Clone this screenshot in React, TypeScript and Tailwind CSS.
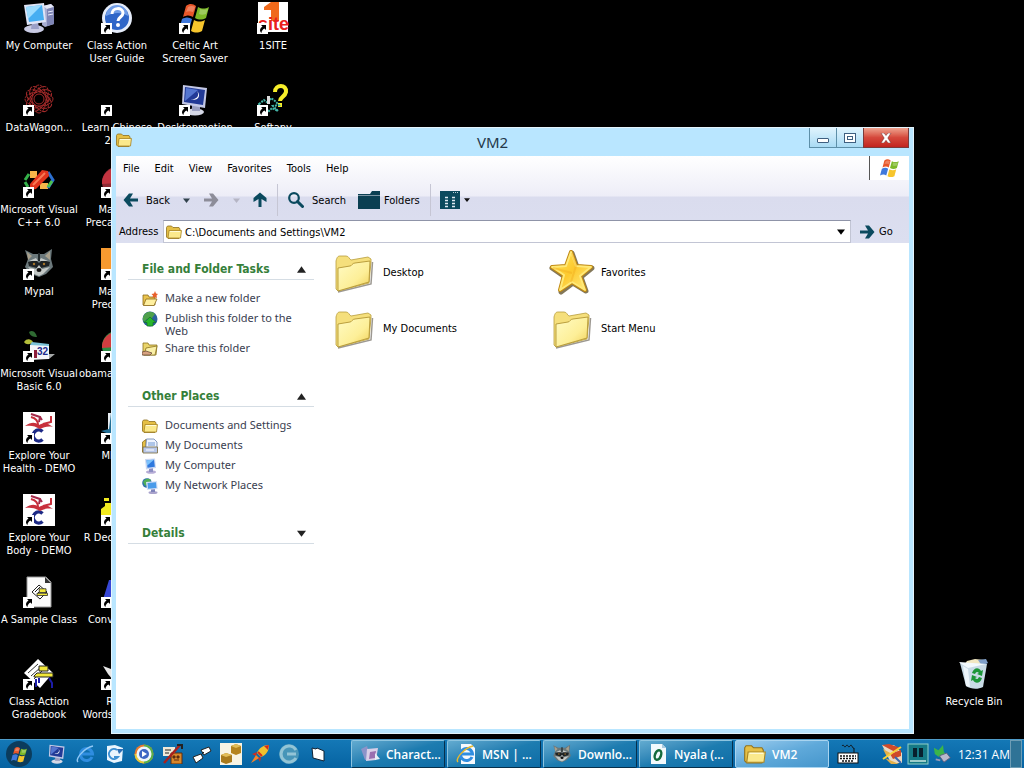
import type { ReactNode } from "react";

/* ---------- desktop icons (32 x 32) ---------- */

function Svg({ s = 32, v = 32, children }: { s?: number; v?: number; children: ReactNode }) {
  return (
    <svg width={s} height={s} viewBox={`0 0 ${v} ${v}`} aria-hidden="true" className="block shrink-0">
      {children}
    </svg>
  );
}

function WinFlag({ s = 32 }: { s?: number }) {
  return (
    <Svg s={s}>
      <path d="M7 4c4-3 7-2 10 0l-3 11c-3-2-6-2-10 0z" fill="#e8572a" />
      <path d="M19 5c4 2 7 2 11 0l-3 11c-4 2-7 2-11 0z" fill="#7db928" />
      <path d="M3 17c4-2 7-2 10 0l-3 11c-3-2-6-2-10 0z" fill="#3f78dc" />
      <path d="M15 18c4 2 7 2 11 0l-3 11c-4 2-7 2-11 0z" fill="#f7c52c" />
      <path d="M9 5c3-1.500 5-1 7 0l-2 5c-3-1-5-1-7 0zM21 7c3 1 5 1 8 0l-2 5c-3 1-5 1-7 0z" fill="#fff" fillOpacity=".25" />
    </Svg>
  );
}

function ComputerIcon({ s = 32 }: { s?: number }) {
  return (
    <Svg s={s}>
      <path d="M20 4l8-2 3 3v17l-9 3-3-2z" fill="#a9aed3" />
      <path d="M20 4l8-2 3 3-7 2z" fill="#e4e6f6" />
      <path d="M24 7l7-2v17l-7 2z" fill="#7f85b5" />
      <path d="M25 10l5-1M25 13l5-1" stroke="#e9ebfa" />
      <ellipse cx="11" cy="27" rx="10" ry="4" fill="#c9cbe4" />
      <path d="M9 20h6l1 7H8z" fill="#9ba0c8" />
      <path d="M1 3l20-2 2 19-19 3z" fill="#dfe4f6" />
      <path d="M3 5l16-2 2 15-15 2z" fill="#46aef2" />
      <path d="M3 5l16-2-14 14z" fill="#9ddcff" />
    </Svg>
  );
}

function HelpIcon() {
  return (
    <Svg>
      <circle cx="16" cy="16" r="15" fill="#e6edfa" />
      <circle cx="16" cy="16" r="12" fill="#2f66c8" />
      <path d="M5 14a11 11 0 0 1 22 0c-6-4-14-4-22 0z" fill="#6f9ce6" />
      <path d="M11 12c0-7 11-7 11-1 0 4-5 4-5 8" fill="none" stroke="#fff" strokeWidth="3" />
      <circle cx="17" cy="23" r="2" fill="#fff" />
    </Svg>
  );
}

function OneSiteIcon() {
  return (
    <Svg>
      <rect x="1" width="30" height="30" fill="#fff" />
      <path d="M7 5l7-5h8v19h-8V8H7z" fill="#f06a1c" />
      <text x="1" y="28" fontSize="18" fontWeight="700" fontFamily="Liberation Sans, sans-serif" fill="#e8201c">
        site
      </text>
    </Svg>
  );
}

function KnotIcon() {
  return (
    <Svg>
      <g fill="none" stroke="#a32a2a" strokeWidth="1">
        {[0, 30, 60, 90, 120, 150].map((a) => (
          <ellipse key={a} cx="16" cy="15" rx="14" ry="7" strokeDasharray="4 1" transform={`rotate(${a} 16 15)`} />
        ))}
        <circle cx="16" cy="15" r="5" />
        <circle cx="16" cy="15" r="10" strokeDasharray="3 2" />
      </g>
    </Svg>
  );
}

function MonitorIcon({ s = 32 }: { s?: number }) {
  return (
    <Svg s={s}>
      <ellipse cx="16" cy="28" rx="9" ry="3.500" fill="#d5d8e6" />
      <path d="M13 21h8v6h-8z" fill="#9a9fc0" />
      <path d="M4 1l24 3-2 20-23-4z" fill="#c3c8e6" />
      <path d="M6 3l20 3-2 15-19-3z" fill="#223a96" />
      <path d="M7 4l12 2-13 11z" fill="#5576cf" />
      <path d="M18 7c3 4 0 9-6 8 6 3 11-3 6-8z" fill="#fff" />
    </Svg>
  );
}

function QuestionIcon() {
  return (
    <Svg>
      <path d="M18 8c0-8 12-8 11 0-1 5-6 5-6 9" fill="none" stroke="#f7ee2a" strokeWidth="4" />
      <rect x="21" y="19" width="4" height="4" fill="#f7ee2a" />
      <path d="M2 20l5-4 4 3 3-5 4 3 4 4-6 1 5 5-6-3-4 4-2-6-5 3z" fill="none" stroke="#43b3a6" strokeWidth="2" strokeDasharray="2 1" />
      <path d="M10 12h3v8h-3z" fill="#ddd" />
    </Svg>
  );
}

function VcIcon() {
  return (
    <Svg>
      <path d="M7 5h7v7H7z" fill="#f7b54a" />
      <path d="M17 17h8v6h-8z" fill="#f7b54a" />
      <path d="M2 14l4-6M2 16l3 5" stroke="#35b24a" strokeWidth="3" fill="none" />
      <path d="M25 6l5 8-5 8" stroke="#2b6fd0" strokeWidth="3" fill="none" />
      <path d="M25 21l4-6" stroke="#4cc04c" strokeWidth="3" />
      <path d="M7 18L19 4l6 1 1 5-13 13-6 1z" fill="#e0341c" />
      <path d="M10 19L22 7" stroke="#f77a55" strokeWidth="2" />
    </Svg>
  );
}

function RaccoonIcon({ s = 32 }: { s?: number }) {
  return (
    <Svg s={s}>
      <path d="M2 2l8 4h11l8-5-1 10 2 8-7 7-7 3-8-3-6-7 3-8z" fill="#6b787b" />
      <path d="M4 4l5 4-4 4zM27 3l-5 5 5 4z" fill="#a9a08c" />
      <path d="M5 14l8-2 3 3 3-3 8 2-1 4-8 2-2-2-2 2-8-2z" fill="#1d2224" />
      <path d="M6 13l7-3 2 3zM25 13l-7-3-2 3zM5 19l8 2 3-4 3 4 8-2-7 7-4 2-5-2z" fill="#c3c8c6" />
      <circle cx="11" cy="16" r="1.200" fill="#a8762a" />
      <circle cx="21" cy="16" r="1.200" fill="#a8762a" />
      <ellipse cx="16" cy="22" rx="2.500" ry="2" fill="#111" />
      <path d="M15 5h2v8h-2z" fill="#222a2c" />
    </Svg>
  );
}

function VbIcon() {
  return (
    <Svg>
      <path d="M6 2c4-3 7 1 8 5-4 0-7-1-8-5z" fill="#2f6b33" />
      <path d="M1 12c3-4 7-3 9 0-3 3-7 3-9 0z" fill="#b5bf3a" />
      <path d="M7 15l19-1v15l-19 1z" fill="#f4f6fa" />
      <path d="M9 12l17 2v2l-19-1z" fill="#7cc3d8" />
      <path d="M11 20h3v8h-3z" fill="#8d1f3c" />
      <path d="M26 24h6l-6 5z" fill="#a5a8a8" />
      <text x="14" y="25" fontSize="10" fontWeight="700" fontFamily="Liberation Sans, sans-serif" fill="#1c2b8c">
        32
      </text>
    </Svg>
  );
}

function ExploreIcon() {
  return (
    <Svg>
      <rect width="32" height="32" fill="#fff" />
      <path d="M19.500 19.500a5.500 5.500 0 1 0 0 8" fill="none" stroke="#1d2a86" strokeWidth="3.500" />
      <path d="M2 14c6-4 10-4 14-1 5-3 9-2 14 2-5-1-9 0-13 2-5-3-9-4-15-3z" fill="#c8303c" />
      <path d="M15 13c0-5-3-7-7-8M20 12l8-2V4" fill="none" stroke="#c8303c" strokeWidth="2" />
      <path d="M8 2l9 3-1 5M17 5l2 3" fill="none" stroke="#a52a4a" strokeWidth="2" />
    </Svg>
  );
}

function Desk() {
  return (
    <>
      <path d="M15 13h9v5h-9z" fill="#f2e83a" stroke="#222" />
      <path d="M12 19h14v3H12z" fill="#f2e83a" stroke="#222" />
    </>
  );
}

function SampleIcon() {
  return (
    <Svg>
      <path d="M4 1h19l5 5v25H4z" fill="#fbfbfb" stroke="#999" />
      <path d="M22 1v6h6" fill="#333" />
      <path d="M9 16l7-7 8 7-7 7z" fill="#fff" stroke="#222" />
      <path d="M12 16l5-5M14 18l5-5" stroke="#222" />
      <g transform="translate(5 3) scale(.75)">
        <Desk />
      </g>
    </Svg>
  );
}

function GradebookIcon() {
  return (
    <Svg>
      <path d="M1 15L15 1l15 14-13 15z" fill="#fff" />
      <path d="M5 15l10-9M8 18L18 9M11 21l9-9" stroke="#333" />
      <path d="M16 8h9v5h-9z" fill="#f2e83a" stroke="#222" />
      <path d="M11 18l3-3h16v4H11z" fill="#f2e83a" stroke="#222" />
      <path d="M13 21v8M16 20v5M26 20l3 5v5" stroke="#1c1ca8" strokeWidth="2" fill="none" />
    </Svg>
  );
}

function BallIcon({ top, bottom }: { top: string; bottom: string }) {
  return (
    <Svg>
      <circle cx="16" cy="16" r="15" fill={bottom} />
      <path d="M1 18a15 15 0 0 1 30-2z" fill={top} />
    </Svg>
  );
}

function Square({ fill }: { fill: string }) {
  return (
    <Svg>
      <rect width="32" height="32" fill={fill} />
    </Svg>
  );
}

function BirdIcon() {
  return (
    <Svg>
      <path d="M7 1h24v28H7z" fill="#e7edf2" />
      <path d="M0 19l8-2 2-16 4 16 10 3-13 3z" fill="#226f96" />
    </Svg>
  );
}

function CastleIcon() {
  return (
    <Svg>
      <path d="M3 4h5v3H3zM0 15l4-3V9h8v4l9 6v12H0z" fill="#f2ea20" />
    </Svg>
  );
}

function LetterIcon() {
  return (
    <Svg>
      <path d="M0 30L8 4h9l10 26h-8l-2-7H10l-3 7z" fill="#3747d6" />
    </Svg>
  );
}

function PenIcon() {
  return (
    <Svg>
      <path d="M2 8l8 3 8 9-1 8L7 16z" fill="#e6e6e6" />
    </Svg>
  );
}

function RecycleIcon() {
  return (
    <Svg>
      <path d="M9 3l8-2 9 1 2 5H6z" fill="#f2e8c2" />
      <path d="M20 2l8-1 2 4-6 3z" fill="#7f9fc9" />
      <path d="M2 5l27 1-4 23c-6 3-12 2-17-1z" fill="#c9dbe6" />
      <path d="M2 5l8 5 18-4-27-2z" fill="#f3f9fd" />
      <path d="M5 8l5 3 2 18-4-1z" fill="#eef6fb" />
      <path d="M14 15c2-6 7-6 9-2l2-1-1 6-5-2 2-1c-2-2-3-1-4 1zM24 20c-2 6-7 6-9 2l-2 1 1-6 5 2-2 1c2 2 3 1 4-1z" fill="#1c9638" />
    </Svg>
  );
}

/* ---------- small icons ---------- */

function SmallFolder({ s = 16 }: { s?: number }) {
  return (
    <Svg s={s} v={16}>
      <path d="M.5 3.500l1-1.500h4L7 3.500h6l1 1.500v8l-1 1.500H2L.5 13z" fill="#e5bf45" stroke="#8e701e" strokeWidth=".8" />
      <path d="M3 6.500h12.500L14.500 14H2z" fill="#fbe98c" stroke="#a88526" strokeWidth=".8" />
      <path d="M4 7.500h10" stroke="#fffbd6" />
    </Svg>
  );
}

function NewFolder() {
  return (
    <Svg s={16} v={16}>
      <path d="M1 4h5l1 2h6v8H1z" fill="#e9c34e" stroke="#8a6a1a" strokeWidth=".8" />
      <path d="M4 8h11l-3 6.500H1.500z" fill="#fff0a0" stroke="#8a6a1a" strokeWidth=".8" />
      <path d="M13 0l1 2.500 2 .5-1.500 1.500.5 2.500-2.500-1-2 1 .5-2.500L9.500 3l2.500-.5z" fill="#e8602c" />
    </Svg>
  );
}

function GlobeUp() {
  return (
    <Svg s={16} v={16}>
      <circle cx="8" cy="8" r="7.500" fill="#2c5f9e" />
      <path d="M2 4c3-4 8-4 11-1l-3 4-5 1-3 3C0 8 1 6 2 4z" fill="#4fa04c" />
      <path d="M8 6l6 5.500h-3V15H5v-3.500H2z" fill="#27b52c" stroke="#0f6a1c" strokeWidth=".6" />
    </Svg>
  );
}

function ShareFolder() {
  return (
    <Svg s={16} v={16}>
      <path d="M1 2h5l1 2h8l-1 10H1z" fill="#e9d46a" stroke="#8a7220" strokeWidth=".8" />
      <path d="M4 7l11-2-2 9H2z" fill="#faf0a8" stroke="#8a7220" strokeWidth=".8" />
      <path d="M0 11l4-1 6 2-2 2H0z" fill="#d8a382" stroke="#5d4030" strokeWidth=".7" />
    </Svg>
  );
}

function DocsFolder() {
  return (
    <Svg s={16} v={16}>
      <path d="M.5 4L4 1.500V14H.5z" fill="#e5bf45" stroke="#8e701e" strokeWidth=".8" />
      <path d="M4.500 1H12l3 3v9H3.500z" fill="#eef4fe" stroke="#6b83ad" strokeWidth=".8" />
      <path d="M6 5h7M6 7h7" stroke="#6f97d4" />
      <path d="M1 9h14.500v6H1z" fill="#b9c8ea" stroke="#7a6a3a" strokeWidth=".8" />
      <path d="M4 12h8" stroke="#fff" />
    </Svg>
  );
}

function PcSmall() {
  return (
    <Svg s={16} v={16}>
      <ellipse cx="9" cy="14" rx="5" ry="1.800" fill="#b7add6" />
      <path d="M7 10h4v4H7z" fill="#8d8fc2" />
      <path d="M3 1l10-.5 1 9.500-10 1.500z" fill="#c9d7f2" />
      <path d="M4.500 2.200l7.500-.4.800 7-7.300 1z" fill="#2f79de" />
      <path d="M4.500 2.200l7.500-.4-7 6z" fill="#7cc2fb" />
    </Svg>
  );
}

function NetPc() {
  return (
    <Svg s={16} v={16}>
      <circle cx="5" cy="5" r="4.800" fill="#2b6fae" />
      <path d="M1 4c2-4 6-4 8-2L6 6 3 8z" fill="#4fae58" />
      <ellipse cx="11" cy="14.500" rx="4.500" ry="1.500" fill="#a9a3cc" />
      <path d="M9 11h4v3H9z" fill="#7f83ba" />
      <path d="M4 4l11-1 .7 8L5 12z" fill="#d5e0f5" />
      <path d="M5.500 5l8.500-.7.500 5.700-8.500.8z" fill="#4a9bea" />
    </Svg>
  );
}

function BigFolder() {
  return (
    <svg width="48" height="48" viewBox="0 0 48 48" aria-hidden="true" className="block shrink-0">
      <defs>
        <linearGradient id="folderFace" x1="0" y1="0" x2="1" y2="1">
          <stop offset="0" stopColor="#fffbc4" />
          <stop offset=".6" stopColor="#fdef98" />
          <stop offset="1" stopColor="#f0cf55" />
        </linearGradient>
      </defs>
      <path d="M8 44l33-8 1.500-22" fill="none" stroke="#4a4436" strokeOpacity=".55" strokeWidth="1.500" />
      <path d="M6 13c1-4 2-5 4-5h6c3 0 3 3 5 4l17-3 3 2v3l-2 21L8 43l-2-2z" fill="#f5df7c" stroke="#b89d3c" strokeWidth=".8" />
      <path d="M8 20l12-2c2 0 2-3 5-3l15-2-1 21-31 9z" fill="url(#folderFace)" stroke="#b39634" strokeWidth=".9" />
    </svg>
  );
}

function BigStar() {
  return (
    <svg width="48" height="48" viewBox="0 0 48 48" aria-hidden="true" className="block shrink-0">
      <defs>
        <linearGradient id="starFace" x1="0" y1="0" x2="1" y2="1">
          <stop offset="0" stopColor="#ffe95e" />
          <stop offset=".5" stopColor="#fdc92e" />
          <stop offset="1" stopColor="#fff08a" />
        </linearGradient>
      </defs>
      <g strokeLinejoin="round">
        <path d="M24 5l5 14 15 1-11 9 5 14-13-8-12 9 4-15L4 20l15-1z" fill="#5a4a22" stroke="#5a4a22" strokeWidth="5" opacity=".75" />
        <path d="M23 4l5 14 15 1-11 9 5 14-13-8-12 8 4-15L4 19l14-1z" fill="#c28a12" stroke="#c28a12" strokeWidth="4" />
        <path d="M23 4l5 14 15 1-11 9 5 14-13-8-12 8 4-15L4 19l14-1z" fill="url(#starFace)" stroke="#ffe978" strokeWidth="2" />
      </g>
      <path d="M24 5l4 13-5 16M24 25L5 20" stroke="#f0a91c" strokeWidth="2" strokeOpacity=".4" fill="none" />
    </svg>
  );
}

function Caret({ color = "#111", up = false, s = 7 }: { color?: string; up?: boolean; s?: number }) {
  return (
    <svg width={s} height={s} viewBox="0 0 10 10" aria-hidden="true" className="block shrink-0">
      <path d={up ? "M0 8.500h10L5 1.500z" : "M0 2h10L5 8.500z"} fill={color} />
    </svg>
  );
}

function Arrow({ color = "#0b4a5e", turn = 0 }: { color?: string; turn?: number }) {
  return (
    <svg width="16" height="16" viewBox="0 0 16 16" aria-hidden="true" className="block shrink-0">
      <path d="M1 6.500h8L6 1.500h4L15.500 8 10 14.500H6l3-5H1z" fill={color} transform={`rotate(${turn} 8 8)`} />
    </svg>
  );
}

/* ---------- desktop ---------- */

type Shortcut = { lines: string[]; icon: ReactNode; link?: boolean; covered?: boolean };

const columns: Shortcut[][] = [
  [
    { lines: ["My Computer"], icon: <ComputerIcon />, link: false },
    { lines: ["DataWagon..."], icon: <KnotIcon /> },
    { lines: ["Microsoft Visual", "C++ 6.0"], icon: <VcIcon /> },
    { lines: ["Mypal"], icon: <RaccoonIcon /> },
    { lines: ["Microsoft Visual", "Basic 6.0"], icon: <VbIcon /> },
    { lines: ["Explore Your", "Health - DEMO"], icon: <ExploreIcon /> },
    { lines: ["Explore Your", "Body - DEMO"], icon: <ExploreIcon /> },
    { lines: ["A Sample Class"], icon: <SampleIcon /> },
    { lines: ["Class Action", "Gradebook"], icon: <GradebookIcon /> },
  ],
  [
    { lines: ["Class Action", "User Guide"], icon: <HelpIcon /> },
    { lines: ["Learn Chinese", "2005"], icon: <Svg>{null}</Svg> },
    { lines: ["Ma", "Preca"], icon: <BallIcon top="#c23440" bottom="#8e2a34" />, covered: true },
    { lines: ["Ma", "Prec"], icon: <Square fill="#f79a30" />, covered: true },
    { lines: ["obama"], icon: <BallIcon top="#d23c40" bottom="#2e8b45" />, covered: true },
    { lines: ["MI"], icon: <BirdIcon />, covered: true },
    { lines: ["R Dec"], icon: <CastleIcon />, covered: true },
    { lines: ["Conv"], icon: <LetterIcon />, covered: true },
    { lines: ["R", "Words"], icon: <PenIcon />, covered: true },
  ],
  [
    { lines: ["Celtic Art", "Screen Saver"], icon: <WinFlag /> },
    { lines: ["Desktopmotion"], icon: <MonitorIcon /> },
  ],
  [
    { lines: ["1SITE"], icon: <OneSiteIcon /> },
    { lines: ["Softany"], icon: <QuestionIcon /> },
  ],
];

function DesktopIcon({ lines, icon, link = true, covered = false }: Shortcut) {
  return (
    <button type="button" className="flex h-[82px] w-[78px] flex-col items-center pt-0.5 text-white">
      <span className="relative block">
        {icon}
        {link && (
          <svg width="11" height="11" viewBox="0 0 11 11" aria-hidden="true" className="absolute bottom-0 left-0">
            <rect width="11" height="11" fill="#fff" />
            <path d="M4 2h5v5L7.500 5.500C5.500 6.500 4.500 8 4.500 10 2 8 3 5 5.500 3.500z" fill="#000" />
          </svg>
        )}
      </span>
      <span
        className={
          "flex w-full flex-col pt-[5px] leading-[13px] whitespace-nowrap " +
          (covered ? "items-end pr-[43px]" : "items-center")
        }
      >
        {lines.map((l) => (
          <span key={l}>{l}</span>
        ))}
      </span>
    </button>
  );
}

/* ---------- explorer window ---------- */

function TitleBar() {
  return (
    <header className="grid h-7 grid-cols-[1fr_auto_1fr] items-start">
      <div className="flex h-6 items-center">
        <SmallFolder />
      </div>
      <h1 className="pt-0.5 pr-10 font-['Noto_Sans'] text-[15px] leading-6 text-[#24384a]">VM2</h1>
      <div className="flex h-5 justify-end">
        <button type="button" aria-label="Minimize" className="flex w-7 items-end justify-center border border-t-0 border-[#5d8fa8] bg-linear-to-b from-[#dff3fd] to-[#a9dbf4] pb-1">
          <span className="h-[5px] w-3 rounded-[1px] border border-[#3f5f80] bg-white" />
        </button>
        <button type="button" aria-label="Restore" className="flex w-[26px] items-center justify-center border-b border-[#5d8fa8] bg-linear-to-b from-[#dff3fd] to-[#a9dbf4]">
          <span className="flex h-2.5 w-3 items-center justify-center border border-[#3f5f80] bg-white">
            <span className="h-1 w-1.5 border border-[#3f5f80]" />
          </span>
        </button>
        <button type="button" aria-label="Close" className="flex w-[46px] items-center justify-center border border-t-0 border-[#7c3a3a] bg-linear-to-b from-[#eda28f] via-[#d5483c] to-[#c2231f]">
          <svg width="12" height="10" viewBox="0 0 12 10" aria-hidden="true">
            <path d="M1 0h3l2 2.500L8 0h3L7.800 5 11 10H8L6 7.300 4 10H1l3.200-5z" fill="#fff" stroke="#6b2a2a" strokeWidth=".5" />
          </svg>
        </button>
      </div>
    </header>
  );
}

function MenuBar() {
  return (
    <nav className="flex h-6 items-stretch justify-between">
      <ul className="flex items-center gap-px">
        {["File", "Edit", "View", "Favorites", "Tools", "Help"].map((m) => (
          <li key={m}>
            <button type="button" className="px-[7px]">
              {m}
            </button>
          </li>
        ))}
      </ul>
      <div className="flex w-10 items-center justify-center border-l border-[#555] bg-white">
        <WinFlag s={20} />
      </div>
    </nav>
  );
}

function Divider() {
  return <span className="h-8 w-px bg-[#c6c6d4]" />;
}

function ToolBar() {
  return (
    <div className="flex h-10 items-center pl-[7px]">
      <button type="button" className="flex w-[54px] items-center gap-[7px]">
        <Arrow turn={180} /> Back
      </button>
      <button type="button" aria-label="Back history" className="ml-1.5 w-4">
        <Caret color="#31424c" />
      </button>
      <button type="button" aria-label="Forward" className="ml-1">
        <Arrow color="#8d8d99" />
      </button>
      <button type="button" aria-label="Forward history" className="ml-3.5">
        <Caret color="#b5b5c4" />
      </button>
      <button type="button" aria-label="Up" className="mr-[9px] ml-3">
        <Arrow turn={-90} />
      </button>
      <Divider />
      <button type="button" className="ml-2.5 flex w-[60px] items-center gap-2">
        <svg width="16" height="16" viewBox="0 0 16 16" aria-hidden="true" className="shrink-0">
          <circle cx="6" cy="6" r="4.800" fill="none" stroke="#0b4a5e" strokeWidth="2.200" />
          <path d="M9.500 9.500l5 5" stroke="#0b4a5e" strokeWidth="3" strokeLinecap="round" />
        </svg>
        Search
      </button>
      <button type="button" className="mr-2 ml-2.5 flex w-[64px] items-center gap-1">
        <svg width="22" height="18" viewBox="0 0 22 18" aria-hidden="true" className="shrink-0">
          <path d="M0 3h12l2-3h8v4.500H0zM0 5h22v13H0z" fill="#0b3f52" />
        </svg>
        Folders
      </button>
      <Divider />
      <button type="button" aria-label="Views" className="ml-[9px] flex items-center gap-1">
        <svg width="20" height="18" viewBox="0 0 20 18" aria-hidden="true">
          <rect width="20" height="18" fill="#0b4a5e" />
          <path d="M5 6.500h3M5 9.500h3M5 12.500h3M5 15.500h3M12 6.500h3M12 9.500h3M12 12.500h3M12 15.500h3" stroke="#dfe9f2" strokeWidth="1.500" />
          <path d="M13 1.500h1M15 1.500h1M17 1.500h1" stroke="#b8d0da" />
        </svg>
        <Caret s={6} />
      </button>
    </div>
  );
}

function AddressBar() {
  return (
    <form className="flex h-[23px] items-center" onSubmit={(e) => e.preventDefault()}>
      <label htmlFor="address" className="w-[47px] pl-[3px]">
        Address
      </label>
      <div className="flex h-full flex-1 items-center gap-[3px] border border-[#c2c5d4] border-t-[#8f94a8] bg-white pt-px pr-[5px] pl-0.5">
        <SmallFolder />
        <input id="address" defaultValue={"C:\\Documents and Settings\\VM2"} className="min-w-0 flex-1 outline-none" />
        <button type="button" aria-label="Address history">
          <Caret color="#000" s={8} />
        </button>
      </div>
      <button type="submit" className="flex w-[58px] items-center gap-1 pl-2">
        <Arrow /> Go
      </button>
    </form>
  );
}

function Section({ title, open, items = [] }: { title: string; open: boolean; items?: [ReactNode, string][] }) {
  return (
    <section>
      <h2 className="border-b border-[#d5dde4]">
        <button type="button" aria-expanded={open} className="flex h-5 w-full items-center justify-between pr-2 pl-3.5 font-['DejaVu_Sans_Condensed'] text-[12px] font-bold text-[#35803a]">
          {title}
          <Caret color="#222" up={open} s={9} />
        </button>
      </h2>
      {open && (
        <ul className="pt-[11px] pb-[25px] pl-3.5 text-[#3a4050]">
          {items.map(([icon, text]) => (
            <li key={text} className="min-h-5 pb-1">
              <a href="#" className="flex items-start gap-[7px] leading-[13px]">
                <span className="h-[13px]">{icon}</span>
                <span className="w-[140px]">{text}</span>
              </a>
            </li>
          ))}
        </ul>
      )}
    </section>
  );
}

function Sidebar() {
  return (
    <aside className="flex w-[198px] shrink-0 flex-col pt-4 pl-3 font-['Noto_Sans'] text-[11px]">
      <Section
        title="File and Folder Tasks"
        open
        items={[
          [<NewFolder />, "Make a new folder"],
          [<GlobeUp />, "Publish this folder to the Web"],
          [<ShareFolder />, "Share this folder"],
        ]}
      />
      <Section
        title="Other Places"
        open
        items={[
          [<SmallFolder />, "Documents and Settings"],
          [<DocsFolder />, "My Documents"],
          [<PcSmall />, "My Computer"],
          [<NetPc />, "My Network Places"],
        ]}
      />
      <Section title="Details" open={false} />
    </aside>
  );
}

function Files() {
  const files: [string, ReactNode][] = [
    ["Desktop", <BigFolder />],
    ["Favorites", <BigStar />],
    ["My Documents", <BigFolder />],
    ["Start Menu", <BigFolder />],
  ];
  return (
    <ul className="grid flex-1 auto-rows-[56px] grid-cols-[repeat(auto-fill,218px)] content-start pt-[5px] pl-4">
      {files.map(([name, icon]) => (
        <li key={name}>
          <button type="button" className="flex items-center gap-[5px]">
            {icon}
            {name}
          </button>
        </li>
      ))}
    </ul>
  );
}

function ExplorerWindow() {
  return (
    <main className="absolute top-[127px] right-[110px] bottom-[5px] left-[111px] flex flex-col border border-[#e4f4fc] bg-[#b9e6ff] px-1 pb-1 text-black">
      <TitleBar />
      <div className="flex min-h-0 flex-1 flex-col bg-white">
        <div className="bg-[linear-gradient(#ffffff_0,#ededf7_40px,#dadcee_41px,#dcdff0_100%)]">
          <MenuBar />
          <ToolBar />
          <AddressBar />
        </div>
        <div className="flex min-h-0 flex-1">
          <Sidebar />
          <Files />
        </div>
      </div>
    </main>
  );
}

/* ---------- taskbar ---------- */

function IeIcon({ s = 20, page = false, color = "#2f8de0" }: { s?: number; page?: boolean; color?: string }) {
  return (
    <Svg s={s} v={20}>
      {page && <path d="M5 0h10l4 4v16H5z" fill="#f6f9fd" />}
      <path d="M16 13a6 6 0 1 1 .5-3H6" fill="none" stroke={color} strokeWidth="3" />
      <path d="M2 18C-1 15 8 4 17 2" fill="none" stroke={page ? "#e8b92c" : "#8fc8f5"} strokeWidth="1.500" />
    </Svg>
  );
}

const quick: [string, ReactNode][] = [
  ["Show display", <MonitorIcon s={20} />],
  ["Internet Explorer", <IeIcon />],
  [
    "Outlook Express",
    <Svg s={20} v={20}>
      <path d="M2 2l8-1 8 3-1 13-8 2-7-3z" fill="#e9f4fd" />
      <path d="M12 6a5 5 0 1 0 1 7h-4" fill="none" stroke="#3c8fd2" strokeWidth="2" />
      <path d="M12 5h7l-5 5z" fill="#2d6fb5" />
    </Svg>,
  ],
  [
    "Media Player",
    <Svg s={20} v={20}>
      <circle cx="10" cy="10" r="9.500" fill="#e87a2e" />
      <path d="M10 .5a9.500 9.500 0 0 1 0 19z" fill="#59b14a" />
      <path d="M.5 10a9.500 9.500 0 0 0 9.500 9.500V10z" fill="#e3c93a" />
      <circle cx="10" cy="10" r="7.500" fill="#eef4fb" />
      <circle cx="10" cy="10" r="5" fill="#3c66c4" />
      <path d="M8 7l5 3-5 3z" fill="#fff" />
    </Svg>,
  ],
  [
    "Tools",
    <Svg s={20} v={20}>
      <path d="M0 3h12v9H0z" fill="#efe9d8" />
      <path d="M2 6h6M2 9h4" stroke="#222" />
      <path d="M8 9h11v11H8z" fill="#d8862a" stroke="#5c2c10" />
      <path d="M10 12h2v2h-2zM14 12h2v2h-2zM11 16h5" fill="#5c2c10" stroke="#5c2c10" />
      <path d="M1 19L17 1" stroke="#a8201c" strokeWidth="2.500" />
      <path d="M14 1h5v4" stroke="#222" strokeWidth="2" fill="none" />
    </Svg>,
  ],
  [
    "Dictionary",
    <Svg s={20} v={20}>
      <path d="M9 6l8-3 2 4-7 4zM1 13l8-3 2 4-7 5z" fill="#fff" stroke="#222" />
      <path d="M9 11l3-3" stroke="#222" />
    </Svg>,
  ],
  [
    "Blocks",
    <Svg s={22} v={22}>
      <rect width="22" height="22" fill="#f8f4e4" />
      <path d="M11 3l5-2 5 2v7l-5 2-5-2z" fill="#b5841f" />
      <path d="M1 12l5-2 6 2v7l-6 2-5-2z" fill="#a87a1c" />
      <path d="M11 3l5 2 5-2-5-2zM1 12l5 2 6-2-6-2z" fill="#e2bd58" />
    </Svg>,
  ],
  [
    "Rocket",
    <Svg s={20} v={20}>
      <path d="M19 1c-6 0-10 3-12 8l4 4c5-2 8-6 8-12z" fill="#f0c22e" />
      <path d="M19 1l-5 1 4 4zM7 8L2 10l4 2zM11 13l-1 5-2-4z" fill="#d42c1c" />
      <path d="M6 11l-5 8 8-5z" fill="#f5842a" />
      <path d="M8 8l4 4" stroke="#d42c1c" strokeWidth="2" />
    </Svg>,
  ],
  [
    "Sync",
    <Svg s={22} v={22}>
      <circle cx="11" cy="11" r="10" fill="#4795b8" />
      <path d="M18 7a8 8 0 1 0 0 8M18 11H9" fill="none" stroke="#93c4d6" strokeWidth="3" />
    </Svg>,
  ],
  [
    "Notes",
    <Svg s={18} v={18}>
      <path d="M3 3l4 1 1-1 7 3v10l-11-3z" fill="#fff" stroke="#123" strokeWidth="1" />
    </Svg>,
  ],
];

const tasks: [string, ReactNode, boolean][] = [
  [
    "Charact...",
    <Svg s={20} v={20}>
      <path d="M1 5l6-3 4 13-6 1z" fill="#8b93c9" />
      <path d="M7 5l11-1-2 12-10 1z" fill="#d9cfe8" />
      <path d="M10 8l6-1-1 7-6 1z" fill="#9a6fb0" />
      <path d="M15 9l5 6-5 1z" fill="#e8eef7" />
    </Svg>,
    false,
  ],
  ["MSN | ...", <IeIcon page />, false],
  ["Downlo...", <RaccoonIcon s={20} />, false],
  [
    "Nyala (...",
    <Svg s={20} v={20}>
      <path d="M3 0h11l4 4v16H3z" fill="#f2f9fc" />
      <path d="M14 0v4h4" fill="#a9cbe0" />
      <ellipse cx="10" cy="11" rx="3" ry="5" fill="none" stroke="#146b3c" strokeWidth="2.500" transform="rotate(20 10 11)" />
    </Svg>,
    false,
  ],
  ["VM2", <SmallFolder s={22} />, true],
];

function Taskbar() {
  return (
    <footer className="flex h-[29px] shrink-0 items-stretch border-t border-[#4f9cc9] bg-linear-to-b from-[#1478b6] to-[#0663a2] font-['Open_Sans',sans-serif] text-[12px] text-white">
      <button type="button" aria-label="Start" className="flex w-[42px] items-center justify-center pr-1">
        <span className="flex size-[26px] items-center justify-center rounded-full bg-[#0b3c5c]">
          <WinFlag s={17} />
        </span>
      </button>
      <div className="flex">
        {quick.map(([name, icon]) => (
          <button key={name} type="button" aria-label={name} className="flex w-[29px] items-center justify-center">
            {icon}
          </button>
        ))}
      </div>
      <div className="ml-[19px] flex min-w-0 flex-1 gap-0.5">
        {tasks.map(([name, icon, active]) => (
          <button
            key={name}
            type="button"
            className={
              "flex w-[94px] items-center gap-1.5 rounded-[2px] border pl-2 font-semibold whitespace-nowrap " +
              (active
                ? "border-[#a8d4f0] bg-linear-to-br from-[#9ccdee] via-[#5fa9da] to-[#4596cc]"
                : "border-[#06304c] border-t-[#8cc4e0] border-l-[#8cc4e0] bg-linear-to-br from-[#62abd0] via-[#1d7cb0] to-[#0d6ca6]")
            }
          >
            {icon}
            {name}
          </button>
        ))}
      </div>
      <div className="flex items-center gap-1">
        <button type="button" aria-label="Keyboard" className="mr-[18px]">
          <Svg s={22} v={22}>
            <path d="M5 3c2-3 2 3 4 0s2 3 4 0 2 3 4 2v5" fill="none" stroke="#111" />
            <rect x="1" y="10" width="20" height="10" fill="#fff" stroke="#111" />
            <path d="M3 13h16M3 15.500h16M5 18h12" stroke="#111" strokeWidth="1.500" strokeDasharray="2 1" />
          </Svg>
        </button>
        <Svg s={22} v={22}>
          <path d="M1 2h12l8 8v10H10z" fill="#e9d9c2" />
          <path d="M1 2l7-1 12 4-6 4zM9 11l11-4v6l-8 3z" fill="#cf4a2a" />
          <path d="M2 6l9 5-5 3zM4 15l14 6-8 0z" fill="#e3b04a" />
          <path d="M14 14l6 6" stroke="#3a66b0" strokeWidth="2" />
          <path d="M2 16L20 4" stroke="#f7d23a" strokeWidth="2" />
        </Svg>
        <Svg s={22} v={22}>
          <rect x="1" y="1" width="20" height="20" fill="#157a86" stroke="#8fd0c8" />
          <path d="M6 5h4v9H6zM12 5h4v9h-4z" fill="#08202e" />
          <path d="M3 18h16" stroke="#c9e8e0" strokeWidth="1.500" />
        </Svg>
        <Svg s={20} v={22}>
          <path d="M1 4l5 3 5-6 1 8 3 2-9 3-4-3z" fill="#3bb54a" />
          <path d="M7 13l8-3 4 5-7 5z" fill="#b9b8cc" stroke="#5c5c7c" />
          <path d="M3 17l5 1" stroke="#9a9ab5" strokeWidth="2" />
        </Svg>
        <time className="ml-px font-medium whitespace-nowrap">12:31 AM</time>
      </div>
      <button type="button" aria-label="Show desktop" className="mr-0.5 w-3 border border-[#6d9db5] bg-[#2f7396]" />
    </footer>
  );
}

export default function App() {
  return (
    <div className="flex h-screen w-full flex-col overflow-hidden bg-black font-['DejaVu_Sans_Condensed','DejaVu_Sans',sans-serif] text-[11px] leading-[13px]">
      <div className="relative flex min-h-0 flex-1 items-start overflow-hidden">
        {columns.map((col, i) => (
          <div key={i} className="flex flex-col">
            {col.map((item, j) => (
              <DesktopIcon key={j} {...item} />
            ))}
          </div>
        ))}
        <div className="absolute right-[11px] bottom-px">
          <DesktopIcon lines={["Recycle Bin"]} icon={<RecycleIcon />} link={false} />
        </div>
        <ExplorerWindow />
      </div>
      <Taskbar />
    </div>
  );
}
